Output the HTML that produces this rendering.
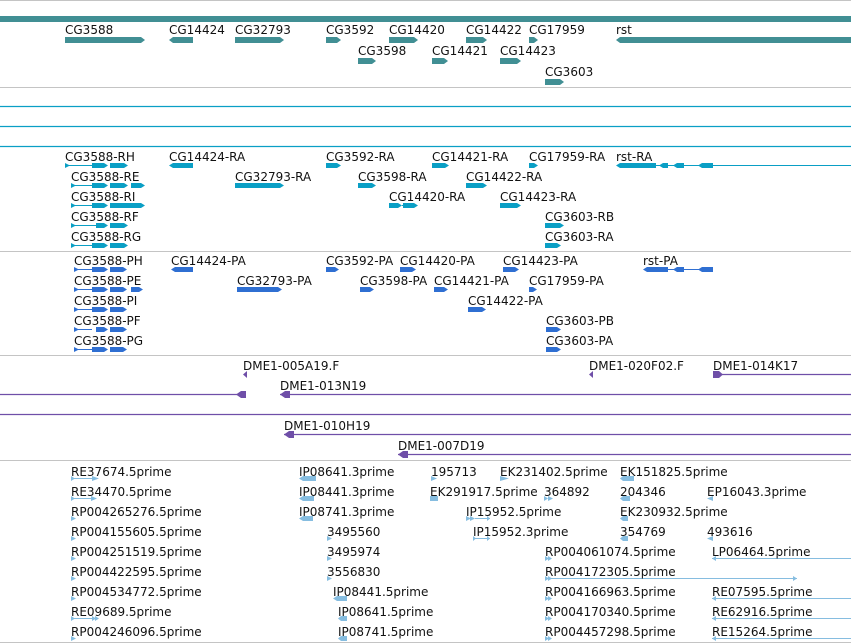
<!DOCTYPE html>
<html><head><meta charset="utf-8"><style>
html,body{margin:0;padding:0;background:#fff;width:851px;height:643px;overflow:hidden}
svg text{font-family:"DejaVu Sans","Liberation Sans",sans-serif;font-size:12px;fill:#111}
</style></head><body>
<svg width="851" height="643" viewBox="0 0 851 643" xmlns="http://www.w3.org/2000/svg">
<!-- separators -->
<g stroke="#c4c4c4" stroke-width="1">
<line x1="0" y1="0.5" x2="851" y2="0.5"/><line x1="0" y1="87.5" x2="851" y2="87.5"/>
<line x1="0" y1="251.5" x2="851" y2="251.5"/><line x1="0" y1="355.5" x2="851" y2="355.5"/>
<line x1="0" y1="460.5" x2="851" y2="460.5"/><line x1="0" y1="642.5" x2="851" y2="642.5"/>
</g>
<g stroke="#0a9fc5" stroke-width="1.2">
<line x1="0" y1="106.5" x2="851" y2="106.5"/><line x1="0" y1="126.5" x2="851" y2="126.5"/><line x1="0" y1="146.5" x2="851" y2="146.5"/>
</g>
<!-- gene track -->
<rect x="0" y="16" width="851" height="6" fill="#418f94"/>
<g fill="#418f94">
<polygon points="65,37 141,37 145,40 141,43 65,43"/>
<polygon points="173,37 193,37 193,43 173,43 169,40"/>
<polygon points="235,37 280,37 284,40 280,43 235,43"/>
<polygon points="326,37 337,37 341,40 337,43 326,43"/>
<polygon points="389,37 414,37 418,40 414,43 389,43"/>
<polygon points="466,37 483,37 487,40 483,43 466,43"/>
<polygon points="529,37 534,37 538,40 534,43 529,43"/>
<polygon points="620,37 851,37 851,43 620,43 616,40"/>
<polygon points="358,58 372,58 376,61 372,64 358,64"/>
<polygon points="432,58 444,58 448,61 444,64 432,64"/>
<polygon points="500,58 517,58 521,61 517,64 500,64"/>
<polygon points="545,79 560,79 564,82 560,85 545,85"/>
</g>
<g>
<text x="65" y="34">CG3588</text><text x="169" y="34">CG14424</text><text x="235" y="34">CG32793</text>
<text x="326" y="34">CG3592</text><text x="389" y="34">CG14420</text><text x="466" y="34">CG14422</text>
<text x="529" y="34">CG17959</text><text x="616" y="34">rst</text>
<text x="358" y="55">CG3598</text><text x="432" y="55">CG14421</text><text x="500" y="55">CG14423</text>
<text x="545" y="76">CG3603</text>
</g>
<!-- transcripts -->
<g fill="#0a9fc5" stroke="#0a9fc5">
<g stroke-width="1">
<line x1="65" y1="165.5" x2="92" y2="165.5"/><line x1="71" y1="185.5" x2="92" y2="185.5"/>
<line x1="71" y1="205.5" x2="92" y2="205.5"/><line x1="71" y1="225.5" x2="96" y2="225.5"/>
<line x1="71" y1="245.5" x2="92" y2="245.5"/><line x1="656" y1="165.5" x2="851" y2="165.5"/>
<line x1="402" y1="205.5" x2="403" y2="205.5"/>
</g>
<g stroke="none">
<polygon points="65,163 70,165.5 65,168"/><polygon points="71,183 76,185.5 71,188"/><polygon points="71,203 76,205.5 71,208"/><polygon points="71,223 76,225.5 71,228"/><polygon points="71,243 76,245.5 71,248"/>
<polygon points="92,163 104,163 108,165.5 104,168 92,168"/><polygon points="110,163 124,163 128,165.5 124,168 110,168"/>
<polygon points="92,183 104,183 108,185.5 104,188 92,188"/><polygon points="110,183 124,183 128,185.5 124,188 110,188"/><polygon points="131,183 141,183 145,185.5 141,188 131,188"/>
<polygon points="92,203 104,203 108,205.5 104,208 92,208"/><polygon points="110,203 141,203 145,205.5 141,208 110,208"/>
<polygon points="96,223 104,223 108,225.5 104,228 96,228"/><polygon points="110,223 124,223 128,225.5 124,228 110,228"/>
<polygon points="92,243 104,243 108,245.5 104,248 92,248"/><polygon points="110,243 124,243 128,245.5 124,248 110,248"/>
<polygon points="173,163 193,163 193,168 173,168 169,165.5"/>
<polygon points="326,163 337,163 341,165.5 337,168 326,168"/>
<polygon points="432,163 445,163 449,165.5 445,168 432,168"/>
<polygon points="529,163 534,163 538,165.5 534,168 529,168"/>
<polygon points="620,163 656,163 656,168 620,168 616,165.5"/>
<polygon points="663,163 668,163 668,168 663,168 659,165.5"/><polygon points="677,163 684,163 684,168 677,168 673,165.5"/>
<polygon points="702,163 713,163 713,168 702,168 698,165.5"/>
<polygon points="235,183 280,183 284,185.5 280,188 235,188"/>
<polygon points="358,183 372,183 376,185.5 372,188 358,188"/>
<polygon points="466,183 483,183 487,185.5 483,188 466,188"/>
<polygon points="389,203 398,203 402,205.5 398,208 389,208"/><polygon points="403,203 414,203 418,205.5 414,208 403,208"/>
<polygon points="500,203 517,203 521,205.5 517,208 500,208"/>
<polygon points="545,223 560,223 564,225.5 560,228 545,228"/>
<polygon points="545,243 557,243 561,245.5 557,248 545,248"/>
</g></g>
<g>
<text x="65" y="161">CG3588-RH</text><text x="169" y="161">CG14424-RA</text><text x="326" y="161">CG3592-RA</text><text x="432" y="161">CG14421-RA</text><text x="529" y="161">CG17959-RA</text><text x="616" y="161">rst-RA</text>
<text x="71" y="181">CG3588-RE</text><text x="235" y="181">CG32793-RA</text><text x="358" y="181">CG3598-RA</text><text x="466" y="181">CG14422-RA</text>
<text x="71" y="201">CG3588-RI</text><text x="389" y="201">CG14420-RA</text><text x="500" y="201">CG14423-RA</text>
<text x="71" y="221">CG3588-RF</text><text x="545" y="221">CG3603-RB</text>
<text x="71" y="241">CG3588-RG</text><text x="545" y="241">CG3603-RA</text>
</g>
<!-- proteins -->
<g fill="#2f6fd2" stroke="#2f6fd2">
<g stroke-width="1">
<line x1="74" y1="269.5" x2="92" y2="269.5"/><line x1="74" y1="289.5" x2="92" y2="289.5"/><line x1="74" y1="309.5" x2="92" y2="309.5"/><line x1="74" y1="329.5" x2="92" y2="329.5"/><line x1="74" y1="349.5" x2="92" y2="349.5"/>
<line x1="660" y1="269.5" x2="713" y2="269.5"/>
</g>
<g stroke="none">
<polygon points="74,267 79,269.5 74,272"/><polygon points="74,287 79,289.5 74,292"/><polygon points="74,307 79,309.5 74,312"/><polygon points="74,327 79,329.5 74,332"/><polygon points="74,347 79,349.5 74,352"/>
<polygon points="92,267 104,267 108,269.5 104,272 92,272"/><polygon points="110,267 123,267 127,269.5 123,272 110,272"/>
<polygon points="92,287 104,287 108,289.5 104,292 92,292"/><polygon points="110,287 123,287 127,289.5 123,292 110,292"/><polygon points="131,287 139,287 143,289.5 139,292 131,292"/>
<polygon points="92,307 104,307 108,309.5 104,312 92,312"/><polygon points="110,307 123,307 127,309.5 123,312 110,312"/>
<polygon points="96,327 104,327 108,329.5 104,332 96,332"/><polygon points="110,327 123,327 127,329.5 123,332 110,332"/>
<polygon points="92,347 104,347 108,349.5 104,352 92,352"/><polygon points="110,347 123,347 127,349.5 123,352 110,352"/>
<polygon points="175,267 193,267 193,272 175,272 171,269.5"/>
<polygon points="326,267 335,267 339,269.5 335,272 326,272"/>
<polygon points="400,267 412,267 416,269.5 412,272 400,272"/>
<polygon points="503,267 515,267 519,269.5 515,272 503,272"/>
<polygon points="647,267 668,267 668,272 647,272 643,269.5"/><polygon points="677,267 684,267 684,272 677,272 673,269.5"/><polygon points="702,267 713,267 713,272 702,272 698,269.5"/>
<polygon points="237,287 278,287 282,289.5 278,292 237,292"/>
<polygon points="360,287 370,287 374,289.5 370,292 360,292"/>
<polygon points="434,287 444,287 448,289.5 444,292 434,292"/>
<polygon points="529,287 533,287 537,289.5 533,292 529,292"/>
<polygon points="468,307 482,307 486,309.5 482,312 468,312"/>
<polygon points="546,327 557,327 561,329.5 557,332 546,332"/>
<polygon points="546,347 557,347 561,349.5 557,352 546,352"/>
</g></g>
<g>
<text x="74" y="265">CG3588-PH</text><text x="171" y="265">CG14424-PA</text><text x="326" y="265">CG3592-PA</text><text x="400" y="265">CG14420-PA</text><text x="503" y="265">CG14423-PA</text><text x="643" y="265">rst-PA</text>
<text x="74" y="285">CG3588-PE</text><text x="237" y="285">CG32793-PA</text><text x="360" y="285">CG3598-PA</text><text x="434" y="285">CG14421-PA</text><text x="529" y="285">CG17959-PA</text>
<text x="74" y="305">CG3588-PI</text><text x="468" y="305">CG14422-PA</text>
<text x="74" y="325">CG3588-PF</text><text x="546" y="325">CG3603-PB</text>
<text x="74" y="345">CG3588-PG</text><text x="546" y="345">CG3603-PA</text>
</g>
<!-- DME -->
<g fill="#6f4fa8" stroke="#6f4fa8" stroke-width="1.2">
<line x1="713" y1="374.5" x2="851" y2="374.5"/>
<line x1="0" y1="394.5" x2="246" y2="394.5"/><line x1="280" y1="394.5" x2="851" y2="394.5"/>
<line x1="0" y1="414.5" x2="851" y2="414.5"/>
<line x1="284" y1="434.5" x2="851" y2="434.5"/>
<line x1="398" y1="454.5" x2="851" y2="454.5"/>
<g stroke="none">
<polygon points="243,374.5 247,371 247,378"/>
<polygon points="589,374.5 593,371 593,378"/>
<polygon points="713,371 719,371 723,374.5 719,378 713,378"/>
<polygon points="236,394.5 241,391 246,391 246,398 241,398"/>
<polygon points="280,394.5 285,391 290,391 290,398 285,398"/>
<polygon points="284,434.5 289,431 294,431 294,438 289,438"/>
<polygon points="398,454.5 403,451 408,451 408,458 403,458"/>
</g></g>
<g>
<text x="243" y="370">DME1-005A19.F</text><text x="589" y="370">DME1-020F02.F</text><text x="713" y="370">DME1-014K17</text>
<text x="280" y="390">DME1-013N19</text><text x="284" y="430">DME1-010H19</text><text x="398" y="450">DME1-007D19</text>
</g>
<!-- ESTs -->
<g fill="#86bde0" stroke="#86bde0" stroke-width="1">
<line x1="71" y1="478.5" x2="94" y2="478.5"/><line x1="71" y1="498.5" x2="92" y2="498.5"/><line x1="71" y1="618.5" x2="94" y2="618.5"/>
<line x1="475" y1="518.5" x2="490" y2="518.5"/><line x1="473" y1="538.5" x2="490" y2="538.5"/>
<line x1="712" y1="558.5" x2="851" y2="558.5"/><line x1="545" y1="578.5" x2="797" y2="578.5"/>
<line x1="712" y1="598.5" x2="851" y2="598.5"/><line x1="712" y1="618.5" x2="851" y2="618.5"/><line x1="712" y1="638.5" x2="851" y2="638.5"/>
<g stroke="none">
<polygon points="71,476 75,478.5 71,481"/><polygon points="92,476 99,478.5 92,481"/>
<polygon points="71,496 75,498.5 71,501"/><polygon points="91,496 97,498.5 91,501"/>
<polygon points="71,516 76,518.5 71,521"/><polygon points="71,536 76,538.5 71,541"/><polygon points="71,556 76,558.5 71,561"/><polygon points="71,576 76,578.5 71,581"/><polygon points="71,596 76,598.5 71,601"/>
<polygon points="71,616 75,618.5 71,621"/><polygon points="92,616 96,618.5 92,621"/><polygon points="95,616 99,618.5 95,621"/>
<polygon points="71,636 76,638.5 71,641"/>
<polygon points="303,476 316,476 316,481 303,481 299,478.5"/>
<polygon points="303,496 314,496 314,501 303,501 299,498.5"/>
<polygon points="303,516 313,516 313,521 303,521 299,518.5"/>
<polygon points="327,536 332,538.5 327,541"/><polygon points="327,556 332,558.5 327,561"/><polygon points="327,576 332,578.5 327,581"/>
<polygon points="337,596 347,596 347,601 337,601 333,598.5"/>
<polygon points="341,616 347,616 347,621 341,621 338,618.5"/>
<polygon points="341,636 347,636 347,641 341,641 338,638.5"/>
<polygon points="431,476 437,478.5 431,481"/>
<polygon points="500,476 509,478.5 500,481"/>
<polygon points="623,476 634,476 634,481 623,481 620,478.5"/>
<polygon points="430,496 438,496 438,501 430,501"/>
<polygon points="544,496 548,498.5 544,501"/><polygon points="548,496 553,498.5 548,501"/>
<polygon points="623,496 630,496 630,501 623,501 620,498.5"/>
<polygon points="707,498.5 713,496 713,501"/>
<polygon points="466,516 471,518.5 466,521"/><polygon points="470,516 475,518.5 470,521"/><polygon points="487,516 490,518.5 487,521"/>
<polygon points="623,516 628,516 628,521 623,521 620,518.5"/>
<polygon points="473,536 476,538.5 473,541"/><polygon points="487,536 490,538.5 487,541"/>
<polygon points="623,536 628,536 628,541 623,541 620,538.5"/>
<polygon points="707,538.5 713,536 713,541"/>
<polygon points="545,556 549,558.5 545,561"/><polygon points="548,556 552,558.5 548,561"/>
<polygon points="712,558.5 716,556 716,561"/>
<polygon points="545,576 549,578.5 545,581"/><polygon points="548,576 552,578.5 548,581"/><polygon points="793,576 797,578.5 793,581"/>
<polygon points="545,596 549,598.5 545,601"/><polygon points="548,596 552,598.5 548,601"/>
<polygon points="545,616 549,618.5 545,621"/><polygon points="548,616 552,618.5 548,621"/>
<polygon points="545,636 549,638.5 545,641"/><polygon points="548,636 552,638.5 548,641"/>
<polygon points="712,598.5 716,596 716,601"/><polygon points="712,618.5 716,616 716,621"/><polygon points="712,638.5 716,636 716,641"/>
</g></g>
<g>
<text x="71" y="476">RE37674.5prime</text><text x="299" y="476">IP08641.3prime</text><text x="431" y="476">195713</text><text x="500" y="476">EK231402.5prime</text><text x="620" y="476">EK151825.5prime</text>
<text x="71" y="496">RE34470.5prime</text><text x="299" y="496">IP08441.3prime</text><text x="430" y="496">EK291917.5prime</text><text x="544" y="496">364892</text><text x="620" y="496">204346</text><text x="707" y="496">EP16043.3prime</text>
<text x="71" y="516">RP004265276.5prime</text><text x="299" y="516">IP08741.3prime</text><text x="466" y="516">IP15952.5prime</text><text x="620" y="516">EK230932.5prime</text>
<text x="71" y="536">RP004155605.5prime</text><text x="327" y="536">3495560</text><text x="473" y="536">IP15952.3prime</text><text x="620" y="536">354769</text><text x="707" y="536">493616</text>
<text x="71" y="556">RP004251519.5prime</text><text x="327" y="556">3495974</text><text x="545" y="556">RP004061074.5prime</text><text x="712" y="556">LP06464.5prime</text>
<text x="71" y="576">RP004422595.5prime</text><text x="327" y="576">3556830</text><text x="545" y="576">RP004172305.5prime</text>
<text x="71" y="596">RP004534772.5prime</text><text x="333" y="596">IP08441.5prime</text><text x="545" y="596">RP004166963.5prime</text><text x="712" y="596">RE07595.5prime</text>
<text x="71" y="616">RE09689.5prime</text><text x="338" y="616">IP08641.5prime</text><text x="545" y="616">RP004170340.5prime</text><text x="712" y="616">RE62916.5prime</text>
<text x="71" y="636">RP004246096.5prime</text><text x="338" y="636">IP08741.5prime</text><text x="545" y="636">RP004457298.5prime</text><text x="712" y="636">RE15264.5prime</text>
</g>
</svg>
</body></html>
